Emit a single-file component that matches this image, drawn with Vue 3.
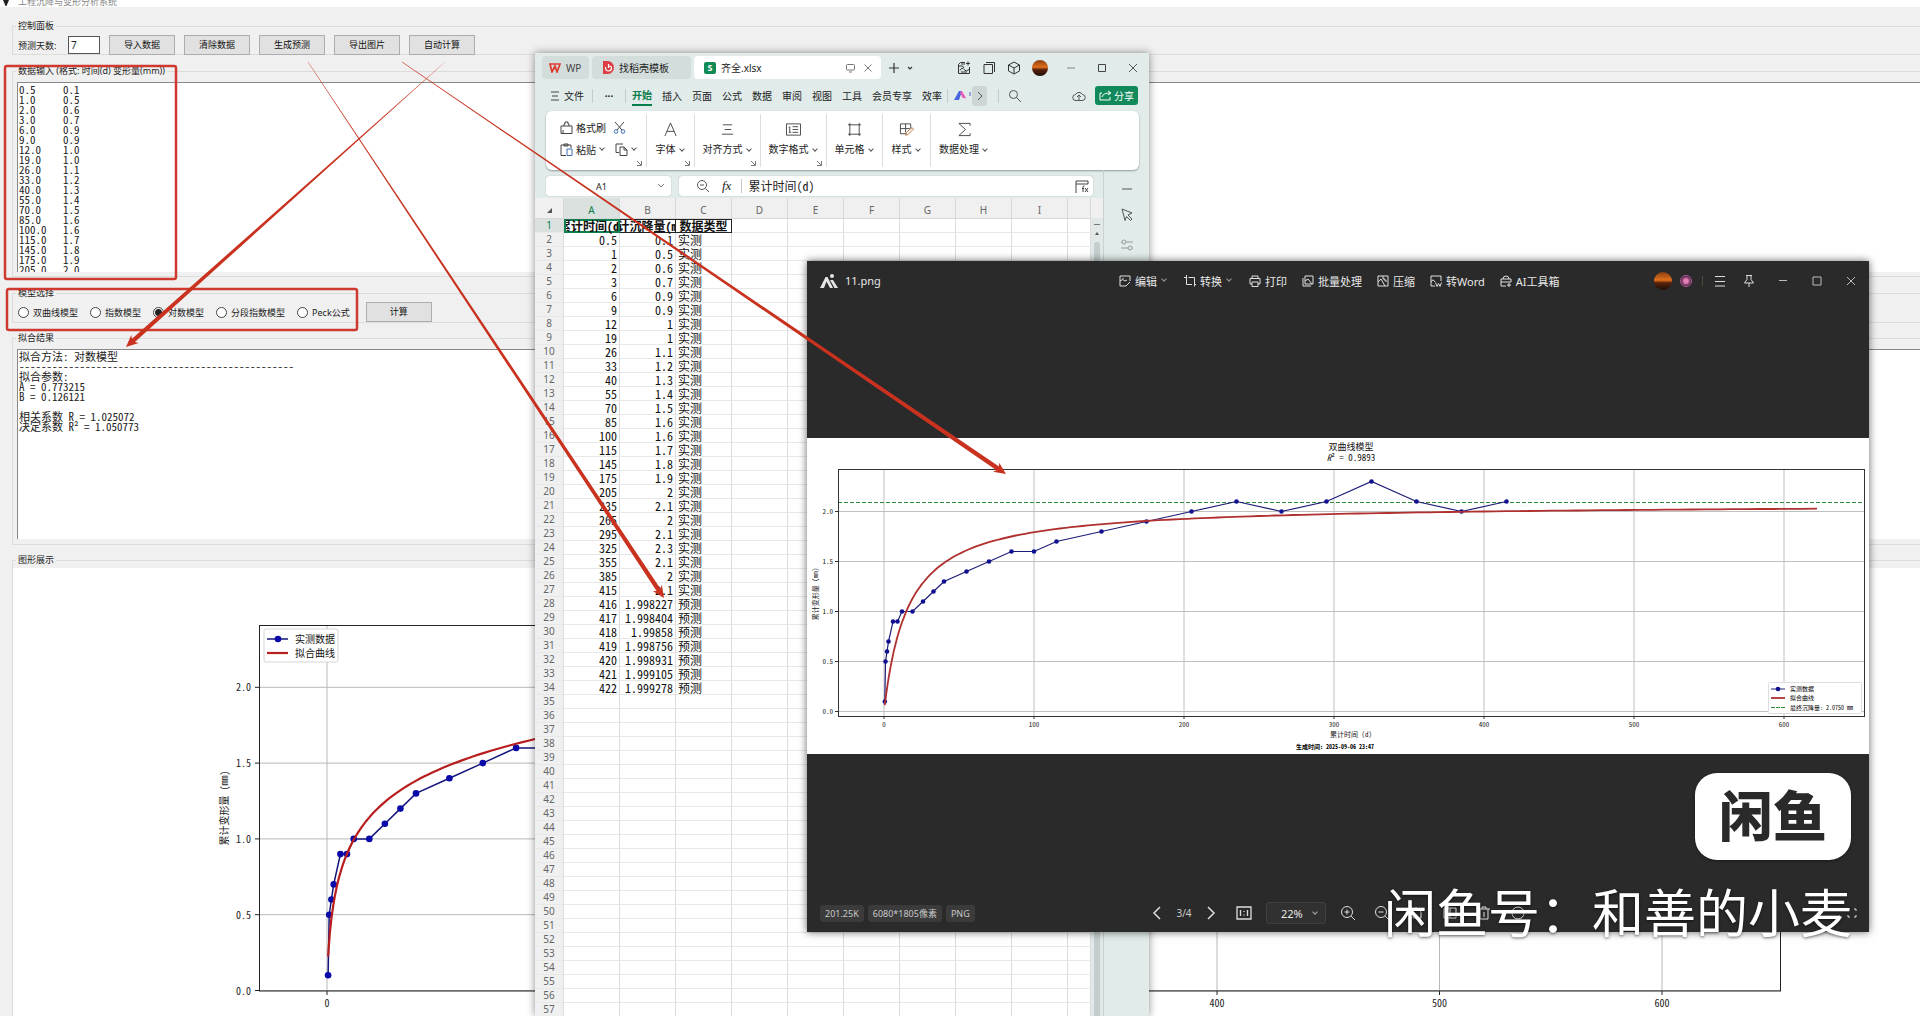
<script setup>
import { ref } from 'vue'

const days = ref('7')
const model = ref('log')
const cellName = ref('A1')
const formula = ref('累计时间(d)')
const zoomLevel = ref('22%')

const actions = ['导入数据', '清除数据', '生成预测', '导出图片', '自动计算']
const models = [
  { id: 'hyper', name: '双曲线模型' },
  { id: 'exp', name: '指数模型' },
  { id: 'log', name: '对数模型' },
  { id: 'seg', name: '分段指数模型' },
  { id: 'peck', name: 'Peck公式' }
]

const measured = [
  [0.5, 0.1], [1, 0.5], [2, 0.6], [3, 0.7], [6, 0.9], [9, 0.9], [12, 1], [19, 1],
  [26, 1.1], [33, 1.2], [40, 1.3], [55, 1.4], [70, 1.5], [85, 1.6], [100, 1.6],
  [115, 1.7], [145, 1.8], [175, 1.9], [205, 2], [235, 2.1], [265, 2], [295, 2.1],
  [325, 2.3], [355, 2.1], [385, 2], [415, 2.1]
]
const predicted = [
  [416, 1.998227], [417, 1.998404], [418, 1.99858], [419, 1.998756],
  [420, 1.998931], [421, 1.999105], [422, 1.999278]
]

const inputText = ref(measured.map(([t, v]) => t.toFixed(1) + '\t' + v.toFixed(1)).join('\n'))
const resultText = ref([
  '拟合方法: 对数模型',
  '-'.repeat(50),
  '拟合参数:',
  'A = 0.773215',
  'B = 0.126121',
  '',
  '相关系数 R = 1.025072',
  '决定系数 R² = 1.050773'
].join('\n'))

const columns = ['A', 'B', 'C', 'D', 'E', 'F', 'G', 'H', 'I', '']
const rows = []
for (let n = 2; n <= 57; n++) {
  const m = measured[n - 2]
  const p = predicted[n - 2 - measured.length]
  if (m) rows.push({ n, t: m[0], v: m[1], kind: '实测' })
  else if (p) rows.push({ n, t: p[0], v: p[1], kind: '预测' })
  else rows.push({ n, t: '', v: '', kind: '' })
}

const menus = ['插入', '页面', '公式', '数据', '审阅', '视图', '工具', '会员专享', '效率']

function scale(x0, kx, y0, ky) {
  return (t, v) => [+(x0 + t * kx).toFixed(1), +(y0 - v * ky).toFixed(1)]
}
const mainAt = scale(327, 2.225, 990.5, 151.6)
const viewAt = scale(884, 1.5, 711.5, 100)

function curve(at, fn, from, to) {
  const pts = []
  for (let i = 0; i <= 160; i++) {
    const t = from + (to - from) * Math.pow(i / 160, 2.5)
    pts.push(at(t, fn(t)).join(','))
  }
  return pts.join(' ')
}
const mainDots = measured.map(([t, v]) => mainAt(t, v))
const viewDots = measured.map(([t, v]) => viewAt(t, v))
const mainFit = curve(mainAt, t => 0.188 + 0.324 * Math.log(t + 0.7 * Math.exp(-t / 4)), 0.5, 622)
const viewFit = curve(viewAt, t => 2.08 * t / (t + 16), 0.5, 622)
const yTicks = [0, 0.5, 1, 1.5, 2]
const xTicks = [0, 100, 200, 300, 400, 500, 600]

function arrow(x1, y1, x2, y2) {
  const len = Math.hypot(x2 - x1, y2 - y1)
  const ux = (x2 - x1) / len
  const uy = (y2 - y1) / len
  const p = (d, w) => (x1 + ux * d - uy * w).toFixed(1) + ',' + (y1 + uy * d + ux * w).toFixed(1)
  const b = len - 10
  return [p(0, 0.2), p(b, 2.2), p(b - 2, 5.5), p(len, 0), p(b - 2, -5.5), p(b, -2.2), p(0, -0.2)].join(' ')
}
const arrows = [arrow(445, 62, 126, 347), arrow(308, 62, 664, 598), arrow(402, 62, 1006, 474)]
</script>

<template>
  <div class="desktop">
    <main class="app">
      <header class="titlebar">
        <svg width="8" height="7" viewBox="0 0 8 7"><path d="M1 0h6L4.500 6h-1z" fill="#222" /></svg>
        <span>工程沉降与变形分析系统</span>
      </header>

      <fieldset class="g-control">
        <legend>控制面板</legend>
        <label for="days">预测天数:</label>
        <input id="days" v-model="days" type="text" />
        <button v-for="a in actions" :key="a" class="wbtn">{{ a }}</button>
      </fieldset>

      <fieldset class="g-input">
        <legend><label for="src">数据输入 (格式: 时间(d) 变形量(mm))</label></legend>
        <textarea id="src" v-model="inputText" wrap="off"></textarea>
      </fieldset>

      <fieldset class="g-model">
        <legend>模型选择</legend>
        <label v-for="m in models" :key="m.id"><input v-model="model" type="radio" name="model" :value="m.id" />{{ m.name }}</label>
        <button class="wbtn">计算</button>
      </fieldset>

      <fieldset class="g-result">
        <legend><label for="res">拟合结果</label></legend>
        <textarea id="res" v-model="resultText" readonly></textarea>
      </fieldset>

      <fieldset class="g-plot">
        <legend>图形展示</legend>
        <svg class="plot" viewBox="13 568 1907 448" preserveAspectRatio="xMinYMin slice">
          <g stroke="#b8b8b8" stroke-width="1">
            <line v-for="x in xTicks" :key="x" :x1="mainAt(x, 0)[0]" :x2="mainAt(x, 0)[0]" y1="625" y2="991" />
            <line v-for="y in yTicks" :key="y" x1="260" x2="1781" :y1="mainAt(0, y)[1]" :y2="mainAt(0, y)[1]" />
          </g>
          <polyline :points="mainDots.map(d => d.join(',')).join(' ')" fill="none" stroke="#14147c" stroke-width="1.500" />
          <circle v-for="(d, i) in mainDots" :key="i" :cx="d[0]" :cy="d[1]" r="3.300" fill="#0a0aa8" />
          <polyline :points="mainFit" fill="none" stroke="#b81e1e" stroke-width="2.200" />
          <rect x="259.500" y="625.500" width="1521" height="365.500" fill="none" stroke="#222" />
          <g stroke="#222">
            <line v-for="x in xTicks" :key="x" :x1="mainAt(x, 0)[0]" :x2="mainAt(x, 0)[0]" y1="991" y2="995" />
            <line v-for="y in yTicks" :key="y" x1="255" x2="259" :y1="mainAt(0, y)[1]" :y2="mainAt(0, y)[1]" />
          </g>
          <g class="t10" fill="#222">
            <text v-for="x in xTicks" :key="x" :x="mainAt(x, 0)[0]" y="1007" text-anchor="middle">{{ x }}</text>
            <text v-for="y in yTicks" :key="y" x="251" :y="mainAt(0, y)[1] + 4" text-anchor="end">{{ y.toFixed(1) }}</text>
            <text transform="translate(228 808) rotate(-90)" text-anchor="middle">累计变形量 (mm)</text>
          </g>
          <rect x="264" y="629" width="74" height="33" rx="2" fill="#fff" stroke="#d6d6d6" />
          <line x1="267" x2="288" y1="639" y2="639" stroke="#14147c" stroke-width="1.500" />
          <circle cx="278" cy="639" r="3.300" fill="#0a0aa8" />
          <line x1="267" x2="288" y1="653" y2="653" stroke="#b81e1e" stroke-width="2.200" />
          <g class="t10" fill="#111">
            <text x="295" y="643">实测数据</text>
            <text x="295" y="657">拟合曲线</text>
          </g>
        </svg>
      </fieldset>
    </main>

    <section class="wps">
      <div class="tabs">
        <div class="tab t-home">
          <svg width="13" height="10" viewBox="0 0 13 10"><path d="M1 1h8M2 1l2 8 3-6 2 6 3-8H8" fill="none" stroke="#e03c31" stroke-width="1.700" /></svg>
          <span>WP</span>
        </div>
        <div class="tab t-tpl">
          <svg width="12" height="13" viewBox="0 0 12 13"><path d="M1 0h5a6 6.500 0 0 1 0 13H1z" fill="#dc4046" /><path d="M3.500 6q0 4 3 4t3-3q0-2-3-2M6.500 3v4" fill="none" stroke="#fff" stroke-width="1.200" /></svg>
          <span>找稻壳模板</span>
        </div>
        <div class="tab t-doc">
          <b>S</b>
          <span>齐全.xlsx</span>
          <svg width="26" height="10" viewBox="0 0 26 10" fill="none" stroke="#777"><rect x=".5" y="1.500" width="8" height="5.500" rx="1" /><path d="M3 9h3M18.500 1.500l7 7M25.500 1.500l-7 7" /></svg>
        </div>
        <svg class="plus" width="26" height="12" viewBox="0 0 26 12" fill="none" stroke="#333" stroke-width="1.200"><path d="M1 6h10M6 1v10M20 5l2 2 2-2" /></svg>
        <div class="wps-icons">
          <svg viewBox="0 0 14 14"><path d="M8 1.500H3.500l-2 2v9h11V6M1.500 5h4l1.500 2M3 9.500q2-4 4-1t5 0M4 3h4M11 .5v4M9 2.500h4M4 11h6" /></svg>
          <svg viewBox="0 0 14 14"><path d="M2 3.500h8.500v9H2zM4 1.500h8.500V11" /></svg>
          <svg viewBox="0 0 14 14"><path d="M7 1l5.500 3v6L7 13l-5.500-3V4zM1.500 4L7 7l5.500-3M7 7v6" /></svg>
          <i class="avatar"></i>
        </div>
        <div class="wps-win">
          <svg viewBox="0 0 12 12"><path d="M2 6h8" /></svg>
          <svg viewBox="0 0 12 12"><path d="M2.500 2.500h7v7h-7z" stroke="#444" /></svg>
          <svg viewBox="0 0 12 12"><path d="M2 2l8 8M10 2l-8 8" stroke="#555" /></svg>
        </div>
      </div>

      <nav class="menu">
        <svg width="8" height="10" viewBox="0 0 8 10" stroke="#444"><path d="M0 1h8M1 5h6M0 9h8" /></svg>
        <a class="file" href="#">文件</a>
        <i class="bar b1"></i>
        <span class="dots">···</span>
        <i class="bar b2"></i>
        <a class="on" href="#">开始</a>
        <a v-for="m in menus" :key="m" href="#">{{ m }}</a>
        <i class="bar b3"></i>
        <svg class="ai" width="17" height="11" viewBox="0 0 17 11"><path d="M0 10l5-9h3L5 10z" fill="#4667e0" /><path d="M6 2l2-1 4 7q-3 1-4-1z" fill="#ea5cba" /><path d="M16 2v4" stroke="#5a5ad0" /></svg>
        <button class="more" aria-label="更多"><svg width="6" height="10" viewBox="0 0 6 10" fill="none" stroke="#555"><path d="M1 1l4 4-4 4" /></svg></button>
        <i class="bar b4"></i>
        <svg width="14" height="14" viewBox="0 0 14 14" fill="none" stroke="#555"><circle cx="5.500" cy="5.500" r="4" /><path d="M8.500 8.500L13 13" /></svg>
        <svg class="cloud" width="14" height="12" viewBox="0 0 14 12" fill="none" stroke="#555"><path d="M4 10.500a3 3 0 0 1-.5-6 4 4 0 0 1 7 0 3 3 0 0 1-.5 6zM7 10V5M5 7l2-2 2 2" /></svg>
        <button class="share">
          <svg width="13" height="11" viewBox="0 0 13 11" fill="none" stroke="#fff"><path d="M3 3H1v7h10V7M3 7q1-4 8-4M9 1l3 2-3 2" /></svg>分享
        </button>
      </nav>

      <div class="ribbon">
        <div class="clip">
          <div>
            <svg class="ic" viewBox="0 0 13 13"><path d="M1 5h11v7.500H1zM4 5V3h1V1h3v2h1v2M3 12V9" /></svg><span>格式刷</span>
            <svg class="ic cut" viewBox="0 0 13 13"><path d="M2 1l7 8M11 1L4 9" /><g stroke="#3f6fb5"><circle cx="3" cy="10.500" r="1.800" /><circle cx="10" cy="10.500" r="1.800" /></g></svg>
          </div>
          <div>
            <svg class="ic" viewBox="0 0 13 13"><path d="M6 12.500H1V2h10v3M4 1h4v2H4z" /><path d="M7 6h5v6.500H7z" stroke="#3f6fb5" /></svg><span>粘贴</span><i class="chev"></i>
            <svg class="ic copy" viewBox="0 0 13 13"><path d="M4 9.500H1V1h7M5 4h4l3 3v5.500H5zM9 4v3h3" /></svg><i class="chev"></i>
          </div>
          <svg class="launch" viewBox="0 0 5 5"><path d="M0 0l4 4M4.500 0v4.500H0" /></svg>
        </div>
        <div class="grp g48"><svg viewBox="0 0 16 16"><path d="M2 15L8 1l6 14M4 10h8" /></svg><span>字体<i class="chev"></i></span><svg class="launch" viewBox="0 0 5 5"><path d="M0 0l4 4M4.500 0v4.500H0" /></svg></div>
        <div class="grp g66"><svg viewBox="0 0 16 16"><path d="M3 3h10M5 8h7M2 13h12" /></svg><span>对齐方式<i class="chev"></i></span><svg class="launch" viewBox="0 0 5 5"><path d="M0 0l4 4M4.500 0v4.500H0" /></svg></div>
        <div class="grp g66"><svg viewBox="0 0 16 16"><path d="M.5 2h15v12H.5zM3 6l1-1v6M3 11h2.500M7 5h6M7 8h6M7 11h6" /></svg><span>数字格式<i class="chev"></i></span><svg class="launch" viewBox="0 0 5 5"><path d="M0 0l4 4M4.500 0v4.500H0" /></svg></div>
        <div class="grp g56"><svg viewBox="0 0 16 16"><path d="M3 1v14M13 1v14M1 3h14M1 13h14" /></svg><span>单元格<i class="chev"></i></span></div>
        <div class="grp g48"><svg viewBox="0 0 16 16"><path d="M8 12.500H1.500V2h11v5M1.500 7h10M7 2v9" /><path d="M7 14l1-3 6-5 1.500 1.500-6 6z" stroke="#b5703c" /></svg><span>样式<i class="chev"></i></span></div>
        <div class="grp g66 last"><svg viewBox="0 0 16 16"><path d="M14 4V1.500H2L9 8l-7 6.500h12V12" /></svg><span>数据处理<i class="chev"></i></span></div>
      </div>

      <div class="body">
        <div class="left">
          <div class="fbar">
            <div class="name"><input v-model="cellName" aria-label="名称框" /><svg width="8" height="6" viewBox="0 0 8 6" fill="none" stroke="#777"><path d="M1 1l3 3 3-3" /></svg></div>
            <div class="fx">
              <svg width="12" height="12" viewBox="0 0 12 12" fill="none" stroke="#555"><circle cx="5" cy="5" r="4.500" /><path d="M3 5h4M8.500 8.500L12 12" /></svg>
              <em>fx</em><i class="bar"></i>
              <input v-model="formula" aria-label="编辑栏" />
              <svg width="14" height="13" viewBox="0 0 14 13" fill="none" stroke="#444"><path d="M1 13V1h12v3M1 4h12M8 12V7q0-1 1.500-1M7 8.500h2M10 8l3 4M13 8l-3 4" /></svg>
            </div>
          </div>
          <div class="sheet">
            <table>
              <colgroup><col class="c0" /><col v-for="(c, i) in columns" :key="i" :class="i === 9 ? 'cl' : 'cx'" /></colgroup>
              <thead>
                <tr><th class="corner"><svg width="5" height="5" viewBox="0 0 5 5"><path d="M5 0v5H0z" fill="#555" /></svg></th><th v-for="(c, i) in columns" :key="i" :class="{ sel: i === 0 }">{{ c }}</th></tr>
              </thead>
              <tbody>
                <tr class="heads">
                  <th class="sel">1</th>
                  <td class="cur"><div>累计时间(d)</div></td><td class="bx"><div>累计沉降量(mm)</div></td><td class="bx"><div>数据类型</div></td>
                  <td v-for="i in 7" :key="i"></td>
                </tr>
                <tr v-for="r in rows" :key="r.n">
                  <th>{{ r.n }}</th><td class="num">{{ r.t }}</td><td class="num">{{ r.v }}</td><td>{{ r.kind }}</td>
                  <td v-for="i in 7" :key="i"></td>
                </tr>
              </tbody>
            </table>
            <div class="scroll"><i class="dash"></i><i class="up"></i><i class="thumb"></i></div>
          </div>
        </div>
        <aside class="side">
          <svg viewBox="0 0 14 14"><path d="M2 7h10" /></svg>
          <svg viewBox="0 0 14 14"><path d="M2 1l10 4-4 2 4 4-1.500 1.500-4-4-1.500 4z" /></svg>
          <svg viewBox="0 0 14 14" class="dim"><path d="M1 4h1M6 4h7M1 10h7M12 10h1" /><circle cx="4" cy="4" r="2" /><circle cx="10" cy="10" r="2" /></svg>
        </aside>
      </div>
    </section>

    <section class="viewer">
      <header class="vhead">
        <svg class="vlogo" width="18" height="14" viewBox="0 0 18 14" fill="#e4e4e4"><path d="M0 14L5.500 3h2L13 14h-3L6.500 7.500 4 14zM10 6h3l5 8h-3.500z" /><circle cx="12" cy="2" r="2" /></svg>
        <span class="fname">11.png</span>
        <div class="vmenu">
          <button><svg viewBox="0 0 12 12"><path d="M7 11H1V1h10v5M1 6q3-3 5 0l2-1M7 11l4-4M3.500 3.500h1" /></svg>编辑<i class="chev"></i></button>
          <button><svg viewBox="0 0 12 12"><path d="M2.500 0v9.500H8M0 2.500h2M4.500 2.500h6v9M10 9.500h2" /></svg>转换<i class="chev"></i></button>
          <button><svg viewBox="0 0 12 12"><path d="M3 3V1h6v2M3 9H1V3.500h10V9H9M3 7h6v4.500H3z" /></svg>打印</button>
          <button><svg viewBox="0 0 12 12"><path d="M3 1h8v8M1 3v8h8M3 1v8h8M3 6l3-2 4 5" /></svg>批量处理</button>
          <button><svg viewBox="0 0 12 12"><path d="M1 1h10v10H1zM1 7l3-3 4 7M6 1v3h2v2h2" /></svg>压缩</button>
          <button><svg viewBox="0 0 12 12"><path d="M5 11H1V1h10v5M1 7q2-4 4 0M5.500 7.500l1.500 4 1.500-3 1.500 3 1.500-4" /></svg>转Word</button>
          <button><svg viewBox="0 0 12 12"><path d="M6 11H1V4h10v3M3 4q0-3 3-3t3 3M1 7h10M9 8v4M7 10h4" /></svg>AI工具箱</button>
        </div>
        <div class="vright">
          <i class="avatar"></i>
          <i class="gem"></i>
          <i class="vbar"></i>
          <svg viewBox="0 0 12 12"><path d="M1 1.500h10M1 6.500h10M1 11h10" /></svg>
          <svg class="pin" viewBox="0 0 12 12"><path d="M3 .5h6M4 .5v4L1.500 8h9L8 4.500v-4M6 8v4" /></svg>
        </div>
        <div class="vwin">
          <svg viewBox="0 0 12 12"><path d="M2 5.500h8" /></svg>
          <svg viewBox="0 0 12 12"><path d="M2 2h8v8H2z" /></svg>
          <svg viewBox="0 0 12 12"><path d="M2 2l8 8M10 2l-8 8" /></svg>
        </div>
      </header>

      <div class="stage">
        <svg class="pic" viewBox="807 438 1062 316">
          <rect x="807" y="438" width="1062" height="316" fill="#fff" />
          <g stroke="#c0c0c0">
            <line v-for="x in xTicks" :key="x" :x1="viewAt(x, 0)[0]" :x2="viewAt(x, 0)[0]" y1="470" y2="716" />
            <line v-for="y in yTicks" :key="y" x1="838" x2="1864" :y1="viewAt(0, y)[1]" :y2="viewAt(0, y)[1]" />
          </g>
          <line x1="838" x2="1864" y1="502.500" y2="502.500" stroke="#2e8b36" stroke-dasharray="4 2" />
          <polyline :points="viewDots.map(d => d.join(',')).join(' ')" fill="none" stroke="#1c1c78" stroke-width="1.200" />
          <circle v-for="(d, i) in viewDots" :key="i" :cx="d[0]" :cy="d[1]" r="2.300" fill="#101090" />
          <polyline :points="viewFit" fill="none" stroke="#b03030" stroke-width="1.800" />
          <rect x="838.500" y="469.500" width="1026" height="247" fill="none" stroke="#333" />
          <g stroke="#333">
            <line v-for="x in xTicks" :key="x" :x1="viewAt(x, 0)[0]" :x2="viewAt(x, 0)[0]" y1="717" y2="719" />
            <line v-for="y in yTicks" :key="y" x1="835" x2="838" :y1="viewAt(0, y)[1]" :y2="viewAt(0, y)[1]" />
          </g>
          <g class="t7" fill="#222">
            <text v-for="x in xTicks" :key="x" :x="viewAt(x, 0)[0]" y="727" text-anchor="middle">{{ x }}</text>
            <text v-for="y in yTicks" :key="y" x="833" :y="viewAt(0, y)[1] + 2" text-anchor="end">{{ y.toFixed(1) }}</text>
            <text x="1351" y="737" text-anchor="middle">累计时间 (d)</text>
            <text transform="translate(818 594) rotate(-90)" text-anchor="middle">累计变形量 (mm)</text>
          </g>
          <g class="t9" fill="#111">
            <text x="1351" y="450" text-anchor="middle">双曲线模型</text>
            <text x="1351" y="461" text-anchor="middle"><tspan font-style="italic">R</tspan>² = 0.9893</text>
          </g>
          <text class="t6 strong" x="1335" y="749" text-anchor="middle">生成时间: 2025-09-06 23:47</text>
          <rect x="1768.500" y="682.500" width="93" height="31" rx="1" fill="#fff" stroke="#dedede" />
          <line x1="1771" x2="1785" y1="689" y2="689" stroke="#1c1c78" />
          <circle cx="1778" cy="689" r="2.300" fill="#101090" />
          <line x1="1771" x2="1785" y1="698" y2="698" stroke="#b03030" stroke-width="1.800" />
          <line x1="1771" x2="1785" y1="707.500" y2="707.500" stroke="#2e8b36" stroke-dasharray="4 1" />
          <g class="t6">
            <text x="1790" y="691">实测数据</text>
            <text x="1790" y="700">拟合曲线</text>
            <text x="1790" y="710">最终沉降量: 2.0750 mm</text>
          </g>
        </svg>
      </div>

      <footer class="vfoot">
        <span class="pill">201.25K</span><span class="pill">6080*1805像素</span><span class="pill">PNG</span>
        <div class="vtools">
          <svg viewBox="0 0 16 16"><path d="M11 2L5 8l6 6" stroke-width="1.500" /></svg>
          <span class="page">3/4</span>
          <svg viewBox="0 0 16 16"><path d="M5 2l6 6-6 6" stroke-width="1.500" /></svg>
          <svg class="one" viewBox="0 0 16 16"><path d="M1 2h14v12H1zM4.500 5v6M11.500 5v6M8 6v1M8 9.500v1" stroke-width="1.300" /></svg>
          <div class="zoom"><select v-model="zoomLevel" aria-label="缩放"><option>22%</option></select><i class="chev"></i></div>
          <svg viewBox="0 0 16 16"><circle cx="7" cy="7" r="5.500" /><path d="M4.500 7h5M7 4.500v5M11 11l4 4" /></svg>
          <svg viewBox="0 0 16 16"><circle cx="7" cy="7" r="5.500" /><path d="M4.500 7h5M11 11l4 4" /></svg>
          <svg viewBox="0 0 16 16"><path d="M3 5q6-5 10 2v6H5V8M3 1v4h4" /></svg>
          <svg viewBox="0 0 16 16"><path d="M2 3h12v10H2zM8 3v10" /></svg>
          <svg viewBox="0 0 16 16"><path d="M2 4h12M6 4V2h4v2M4 4v10h8V4M8 7v5" /></svg>
          <svg viewBox="0 0 16 16"><circle cx="8" cy="8" r="6" /></svg>
        </div>
        <svg class="full" viewBox="0 0 10 10"><path d="M1 3V1h2M7 1h2v2M9 7v2H7M3 9H1V7" /></svg>
      </footer>
    </section>

    <svg class="marks" width="1200" height="620" viewBox="0 0 1200 620">
      <g fill="none" stroke="#cf3a30" stroke-width="2.500">
        <rect x="5" y="66" width="171" height="213" rx="2" />
        <rect x="7" y="289" width="350" height="41" rx="2" />
      </g>
      <polygon v-for="(a, i) in arrows" :key="i" :points="a" fill="#c8321f" />
    </svg>

    <div class="badge">闲鱼</div>
    <p class="watermark">闲鱼号：和善的小麦</p>
  </div>
</template>

<style>
html, body { height: 100%; overflow: hidden; }
</style>

<style scoped>
* { box-sizing: border-box; }
.desktop { position: relative; height: 100vh; overflow: hidden; background: #f0f0f0; font-family: "Noto Sans", "Noto Sans CJK SC", sans-serif; color: #222; }
i { font-style: normal; flex: none; }
svg { flex: none; display: block; }
button { font-family: inherit; cursor: pointer; }
input, textarea, select { font-family: inherit; color: inherit; outline: none; }

.app { height: 100%; display: flex; flex-direction: column; font-size: 9px; }
.titlebar { height: 7px; background: #fff; overflow: hidden; display: flex; align-items: flex-end; gap: 8px; padding-left: 2px; font-size: 9px; line-height: 10px; color: #888; margin-bottom: 13px; }
fieldset { margin: 0 0 0 12px; min-width: 0; border: 1px solid #dcdcdc; border-right: 0; padding: 0; display: flex; align-items: center; flex: none; }
legend { height: 12px; line-height: 12px; padding: 0 2px; margin-left: 3px; white-space: nowrap; font-size: 9px; }
.g-control { height: 35px; padding: 3px 5px 0; }
.g-control > label { width: 50px; }
.g-control > input { width: 32px; height: 18px; border: 1px solid #555; background: #fff; font-size: 10px; padding: 0 2px; }
.g-control legend, .g-model legend { margin-left: -2px; }
.g-input legend, .g-result legend { margin-left: -1px; }
.wbtn { width: 66px; height: 20px; padding: 0; margin-left: 9px; border: 1px solid #adadad; background: #e1e1e1; font-size: 9px; line-height: 12px; color: #111; }
.g-input { height: 212px; margin-top: 10px; padding: 5px 0 4px 4px; }
textarea { display: block; width: 100%; height: 190px; resize: none; overflow: hidden; border: 1px solid #888; border-width: 1px 0 0 1px; background: #fff; padding: 1px; margin: 0; font-family: "Noto Sans Mono CJK SC", "Noto Sans CJK SC", monospace; font-size: 11px; line-height: 10px; tab-size: 8; }
.g-model { height: 36px; margin-top: 10px; padding: 3px 5px 0; }
.g-model label { display: flex; align-items: center; gap: 4px; margin-right: 12px; white-space: nowrap; }
.g-model .wbtn { margin-left: 4px; }
input[type=radio] { appearance: none; width: 11px; height: 11px; margin: 0; border: 1px solid #444; border-radius: 50%; background: #fff; }
input[type=radio]:checked { background: radial-gradient(#222 0 3px, #fff 4px); }
.g-result { height: 213px; margin-top: 9px; padding: 5px 0 4px 4px; }
.g-plot { flex: 1; margin-top: 9px; padding-top: 2px; align-items: flex-start; border-bottom: 0; }
.plot { width: 100%; height: 448px; background: #fff; }
.t10, .t9, .t7, .t6 { font-family: "Noto Sans Mono CJK SC", "Noto Sans CJK SC", monospace; }
.t10 { font-size: 10px; }
.t9 { font-size: 9px; }
.t7 { font-size: 7px; }
.t6 { font-size: 6px; }
.strong { font-weight: 700; }

.wps { position: absolute; left: 535px; top: 53px; bottom: 0; width: 614px; display: flex; flex-direction: column; background: #e0ebea; box-shadow: 0 0 8px rgba(0, 0, 0, .45); font-size: 10px; }
.tabs { height: 29px; flex: none; display: flex; align-items: center; padding-left: 7px; gap: 3px; }
.tab { height: 23px; border-radius: 4px; background: #d2dddc; display: flex; align-items: center; gap: 5px; white-space: nowrap; color: #444; }
.t-home { width: 47px; padding-left: 6px; }
.t-tpl { width: 99px; padding-left: 10px; color: #222; }
.t-doc { width: 187px; padding: 0 9px 0 10px; background: #fff; color: #222; }
.t-doc b { width: 12px; height: 12px; border-radius: 2px; background: #118a56; color: #fff; font-size: 9px; line-height: 12px; text-align: center; }
.t-doc svg { margin-left: auto; }
.plus { margin-left: 4px; }
.wps-icons { margin-left: auto; display: flex; align-items: center; gap: 11px; }
.wps-icons svg { width: 14px; height: 14px; fill: none; stroke: #333; }
.avatar { width: 16px; height: 16px; border-radius: 50%; background: linear-gradient(#8a3f14, #e0701c 45%, #5a220c 60%, #1e0d08); }
.wps-win { display: flex; padding: 0 10px 0 14px; gap: 19px; }
.wps-win svg { width: 12px; height: 12px; fill: none; stroke: #888; }
.menu { height: 29px; flex: none; display: flex; align-items: center; padding: 0 11px 2px 16px; white-space: nowrap; }
.menu a { color: #222; text-decoration: none; margin-right: 10px; line-height: 20px; }
.menu a.on { color: #0a7d4c; font-weight: 700; border-bottom: 2px solid #0a7d4c; line-height: 18px; }
.menu a.file { margin: 0 8px 0 5px; }
.bar { width: 1px; height: 14px; background: #c2cccb; }
.dots { width: 32px; text-align: center; font-weight: 700; }
.b2 { margin-right: 6px; }
.b3 { margin-left: -5px; }
.ai { margin-left: 6px; }
.more { width: 15px; height: 20px; margin-left: 1px; padding: 0; border: 0; border-radius: 3px; background: #cdd6d5; display: flex; align-items: center; justify-content: center; }
.b4 { margin: 0 9px 0 11px; }
.cloud { margin-left: auto; }
.share { width: 43px; height: 19px; margin-left: 9px; padding: 0; border: 0; border-radius: 3px; background: #11895a; color: #fff; font-size: 10px; display: flex; align-items: center; justify-content: center; gap: 2px; }
.ribbon { height: 59px; flex: none; margin: 0 10px 0 11px; border-radius: 6px; background: #fff; box-shadow: 0 1px 2px rgba(0, 0, 0, .35); display: flex; align-items: center; }
.clip { position: relative; width: 101px; padding-left: 14px; display: flex; flex-direction: column; gap: 6px; border-right: 1px solid #ddd; height: 53px; padding-top: 5px; }
.clip > div { display: flex; align-items: center; height: 16px; }
.clip span { margin-left: 3px; }
.ic { width: 13px; height: 13px; fill: none; stroke: #444; }
.cut { margin-left: 7px; }
.copy { margin-left: 9px; }
.chev { display: inline-block; width: 4px; height: 4px; border: solid #555; border-width: 0 1px 1px 0; rotate: 45deg; margin: 0 2px 2px 4px; vertical-align: middle; }
.grp { position: relative; height: 53px; border-right: 1px solid #ddd; display: flex; flex-direction: column; align-items: center; justify-content: center; gap: 5px; padding-bottom: 4px; white-space: nowrap; line-height: 14px; }
.grp svg { width: 15px; height: 15px; fill: none; stroke: #444; }
.clip .launch, .grp .launch { position: absolute; right: 4px; bottom: 1px; width: 5px; height: 5px; fill: none; stroke: #777; }
.last { border: 0; }
.g48 { width: 48px; } .g56 { width: 56px; } .g66 { width: 66px; }
.body { flex: 1; min-height: 0; display: flex; }
.left { width: 569px; display: flex; flex-direction: column; border-right: 1px solid #c8d2d1; overflow: hidden; }
.fbar { flex: none; height: 28px; padding: 6px 10px 2px 11px; display: flex; gap: 8px; }
.name, .fx { background: #fff; border-radius: 3px; height: 20px; display: flex; align-items: center; box-shadow: 0 0 1px rgba(0, 0, 0, .4); }
.name { width: 125px; padding-right: 5px; }
.name input { width: 111px; border: 0; background: none; text-align: center; font-size: 9px; padding: 0; }
.fx { flex: 1; padding: 0 4px 0 18px; }
.fx em { font-family: "Liberation Serif", serif; font-size: 13px; margin: 0 10px 0 13px; }
.fx input { flex: 1; min-width: 0; border: 0; background: none; padding: 0 0 2px; margin-left: 6px; font-size: 12px; font-family: "Noto Sans Mono CJK SC", "Noto Sans CJK SC", monospace; }
.sheet { flex: 1; min-height: 0; display: flex; background: #f0f0f0; overflow: hidden; }
table { flex: none; width: 556px; border-collapse: separate; border-spacing: 0; table-layout: fixed; align-self: flex-start; font-family: "Noto Sans Mono CJK SC", "Noto Sans CJK SC", monospace; font-size: 12px; color: #111; }
.c0 { width: 29px; } .cx { width: 56px; } .cl { width: 23px; }
th, td { height: 14px; padding: 0; line-height: 13px; white-space: nowrap; border-right: 1px solid #dcdcdc; border-bottom: 1px solid #e8e8e8; }
th { font-family: "Noto Sans", sans-serif; font-weight: 400; font-size: 10px; color: #666; background: #f0f0f0; text-align: center; }
thead th { height: 21px; padding-top: 4px; line-height: 15px; border-color: #d8d8d8; }
.corner svg { margin-left: 12px; }
th.sel { background: #dbe1df; color: #0a7d4c; }
td { background: #fff; padding-left: 2px; }
td.num { text-align: right; padding: 0 2px 0 0; }
.heads td div { display: flex; justify-content: center; font-weight: 700; overflow-x: clip; line-height: 12px; height: 12px; }
.heads td { padding: 0; }
.heads td.bx { border: 1px solid #222; border-left: 0; }
.heads td.cur { border: 2px solid #11804f; }
.heads td.cur div { height: 10px; line-height: 10px; }
.scroll { flex: 1; margin-top: 20px; background: #e2e8e8; display: flex; flex-direction: column; align-items: center; }
.dash { width: 6px; height: 1px; margin-top: 6px; background: #777; }
.up { margin: 7px 0; border: 2px solid transparent; border-top: 0; border-bottom: 3px solid #555; }
.thumb { width: 6px; flex: 1; border-radius: 3px 3px 0 0; background: #c3cdcd; }
.side { flex: 1; display: flex; flex-direction: column; align-items: center; gap: 12px; padding-top: 12px; }
.side svg { width: 14px; height: 14px; fill: none; stroke: #555; }
.side .dim { margin-top: 4px; stroke: #999; }

.viewer { position: absolute; left: 807px; top: 261px; width: 1062px; height: 671px; background: #2a2a2a; box-shadow: 0 0 8px rgba(0, 0, 0, .6); display: flex; flex-direction: column; color: #e8e8e8; font-size: 11px; }
.vhead { height: 39px; flex: none; display: flex; align-items: center; padding-left: 13px; }
.fname { margin-left: 7px; font-size: 11px; width: 60px; }
.vmenu { margin-left: 214px; display: flex; gap: 15px; }
.vmenu button { display: flex; align-items: center; gap: 4px; padding: 0; border: 0; background: none; color: inherit; font-size: 11px; white-space: nowrap; }
.vmenu svg { width: 12px; height: 12px; fill: none; stroke: #e0e0e0; }
.vmenu .chev { margin: 0 3px 3px 1px; border-color: #999; }
.vright { margin-left: auto; display: flex; align-items: center; }
.vright svg { width: 12px; height: 12px; fill: none; stroke: #ddd; }
.vhead .avatar { width: 18px; height: 18px; }
.gem { width: 12px; height: 12px; margin: 0 10px 0 8px; border: 1px solid #b05a9c; border-radius: 50%; background: radial-gradient(#e880b8 0 2px, #43203c 5px); }
.vbar { width: 1px; height: 10px; background: #4a4a3a; margin-right: 11px; }
.pin { margin-left: 17px; }
.vwin { display: flex; gap: 22px; padding: 0 12px 0 22px; }
.vwin svg { width: 12px; height: 12px; fill: none; stroke: #bbb; }
.stage { flex: 1; display: flex; align-items: center; padding-bottom: 2px; }
.pic { width: 100%; height: auto; }
.vfoot { height: 38px; flex: none; display: flex; align-items: center; padding: 0 12px 0 13px; position: relative; }
.pill { height: 17px; line-height: 17px; padding: 0 5px; margin-right: 4px; border-radius: 3px; background: #3b3b3b; color: #c8c8c8; font-size: 9px; white-space: nowrap; }
.vtools { position: absolute; left: 342px; display: flex; align-items: center; gap: 18px; }
.vtools svg { width: 16px; height: 16px; fill: none; stroke: #ddd; }
.vtools .page { width: 16px; font-size: 10px; color: #ccc; margin: 0 -7px; text-align: center; display: flex; justify-content: center; }
.vtools .one { margin-left: -1px; }
.zoom { width: 60px; height: 22px; margin: 0 -4px; border: 1px solid #3f3f3f; border-radius: 3px; background: #313131; display: flex; align-items: center; }
.zoom select { appearance: none; flex: 1; min-width: 0; border: 0; padding: 0 0 0 14px; background: none; font-size: 11px; }
.zoom .chev { margin: 0 8px 3px 0; border-color: #aaa; }
.full { width: 10px; height: 10px; margin-left: auto; fill: none; stroke: #ddd; }

.marks { position: absolute; left: 0; top: 0; pointer-events: none; }
.badge { position: absolute; left: 1695px; top: 773px; width: 156px; height: 87px; border-radius: 22px; background: #fff; color: #2a2a2a; font-size: 54px; font-weight: 900; line-height: 86px; text-align: center; box-shadow: 0 1px 3px rgba(0, 0, 0, .4); }
.watermark { position: absolute; left: 1384px; top: 876px; margin: 0; color: #fff; font-size: 52px; font-weight: 400; line-height: 74px; white-space: nowrap; text-shadow: 0 1px 3px rgba(0, 0, 0, .55); }
</style>
